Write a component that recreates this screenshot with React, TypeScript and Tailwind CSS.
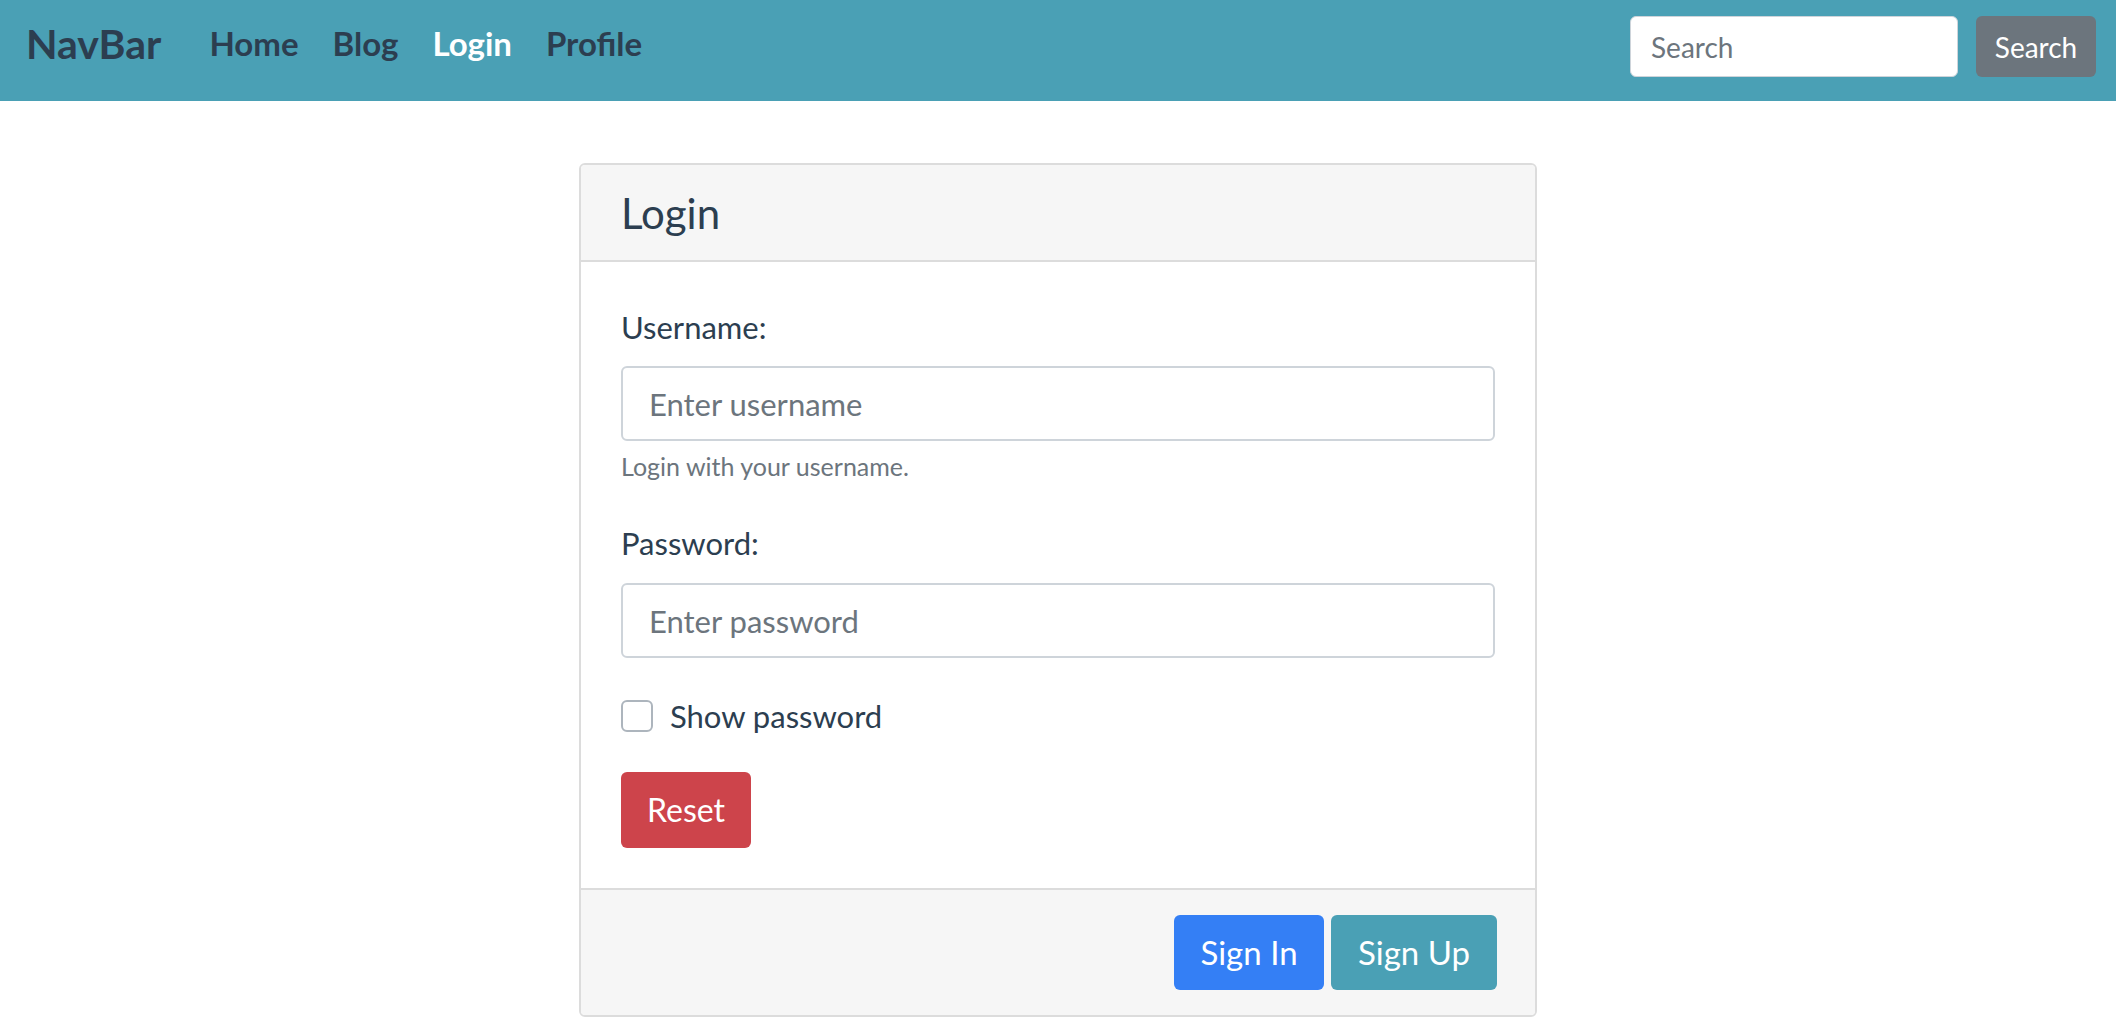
import { useState } from "react";

const font = { fontFamily: "Lato, 'Noto Sans', sans-serif" };

export default function App() {
  const [show, setShow] = useState(false);
  const [username, setUsername] = useState("");
  const [password, setPassword] = useState("");

  return (
    <div className="min-h-screen bg-white text-[#2c3e50]" style={font}>
      {/* Navbar */}
      <nav className="h-[101px] bg-[#4aa0b5] flex items-center pl-[26px] pr-[20px] pb-[8px]">
        <div className="flex items-center pb-[6px]">
          <a className="text-[41px] font-bold text-[#2c3e50] mr-[31px] leading-none">NavBar</a>
          <ul className="flex items-center">
            <li className="px-[17px] text-[33px] font-bold text-[#2c3e50] leading-none">Home</li>
            <li className="px-[17px] text-[33px] font-bold text-[#2c3e50] leading-none">Blog</li>
            <li className="px-[17px] text-[33px] font-bold text-white leading-none">Login</li>
            <li className="px-[17px] text-[33px] font-bold text-[#2c3e50] leading-none">Profile</li>
          </ul>
        </div>
        <form className="ml-auto flex items-center gap-[18px]">
          <input
            type="text"
            placeholder="Search"
            className="w-[328px] h-[61px] px-[20px] rounded-[6px] bg-white border border-[#ced4da] text-[28px] placeholder-[#6c757d] outline-none"
          />
          <button
            type="button"
            className="w-[120px] h-[61px] rounded-[6px] bg-[#6c757d] text-white text-[28px]"
          >
            Search
          </button>
        </form>
      </nav>

      {/* Card */}
      <div className="pt-[62px] flex justify-center">
        <div className="w-[958px] border-2 border-[#dcdcdc] rounded-[6px] overflow-hidden">
          <div className="h-[97px] bg-[#f6f6f6] border-b-2 border-[#dcdcdc] flex items-center px-[40px]">
            <h4 className="text-[42px] leading-none">Login</h4>
          </div>

          <div className="px-[40px] pt-[45px] pb-[40px]">
            <label className="block text-[31px] leading-[40px] mb-[19px]">Username:</label>
            <input
              type="text"
              value={username}
              onChange={(e) => setUsername(e.target.value)}
              placeholder="Enter username"
              className="block w-full h-[75px] px-[26px] rounded-[6px] border-2 border-[#ced4da] text-[31px] placeholder-[#6c757d] outline-none"
            />
            <p className="mt-[9px] text-[25px] leading-[32px] text-[#6c757d]">Login with your username.</p>

            <label className="block mt-[41px] text-[31px] leading-[40px] mb-[20px]">Password:</label>
            <input
              type={show ? "text" : "password"}
              value={password}
              onChange={(e) => setPassword(e.target.value)}
              placeholder="Enter password"
              className="block w-full h-[75px] px-[26px] rounded-[6px] border-2 border-[#ced4da] text-[31px] placeholder-[#6c757d] outline-none"
            />

            <label className="mt-[38px] flex items-center gap-[17px] h-[40px] cursor-pointer">
              <input
                type="checkbox"
                checked={show}
                onChange={() => setShow(!show)}
                className="appearance-none w-[32px] h-[32px] rounded-[6px] border-2 border-[#adb5bd] bg-white checked:bg-[#3a80f6]"
              />
              <span className="text-[31px] leading-[40px]">Show password</span>
            </label>

            <button
              type="button"
              onClick={() => {
                setUsername("");
                setPassword("");
              }}
              className="mt-[36px] w-[130px] h-[76px] rounded-[6px] bg-[#cd444b] text-white text-[32px]"
            >
              Reset
            </button>
          </div>

          <div className="bg-[#f6f6f6] border-t-2 border-[#dcdcdc] flex justify-end gap-[7px] px-[38px] pt-[25px] pb-[25px]">
            <button type="button" className="w-[150px] h-[75px] rounded-[6px] bg-[#347ff5] text-white text-[33px]">
              Sign In
            </button>
            <button type="button" className="w-[166px] h-[75px] rounded-[6px] bg-[#4aa0b5] text-white text-[33px]">
              Sign Up
            </button>
          </div>
        </div>
      </div>
    </div>
  );
}
